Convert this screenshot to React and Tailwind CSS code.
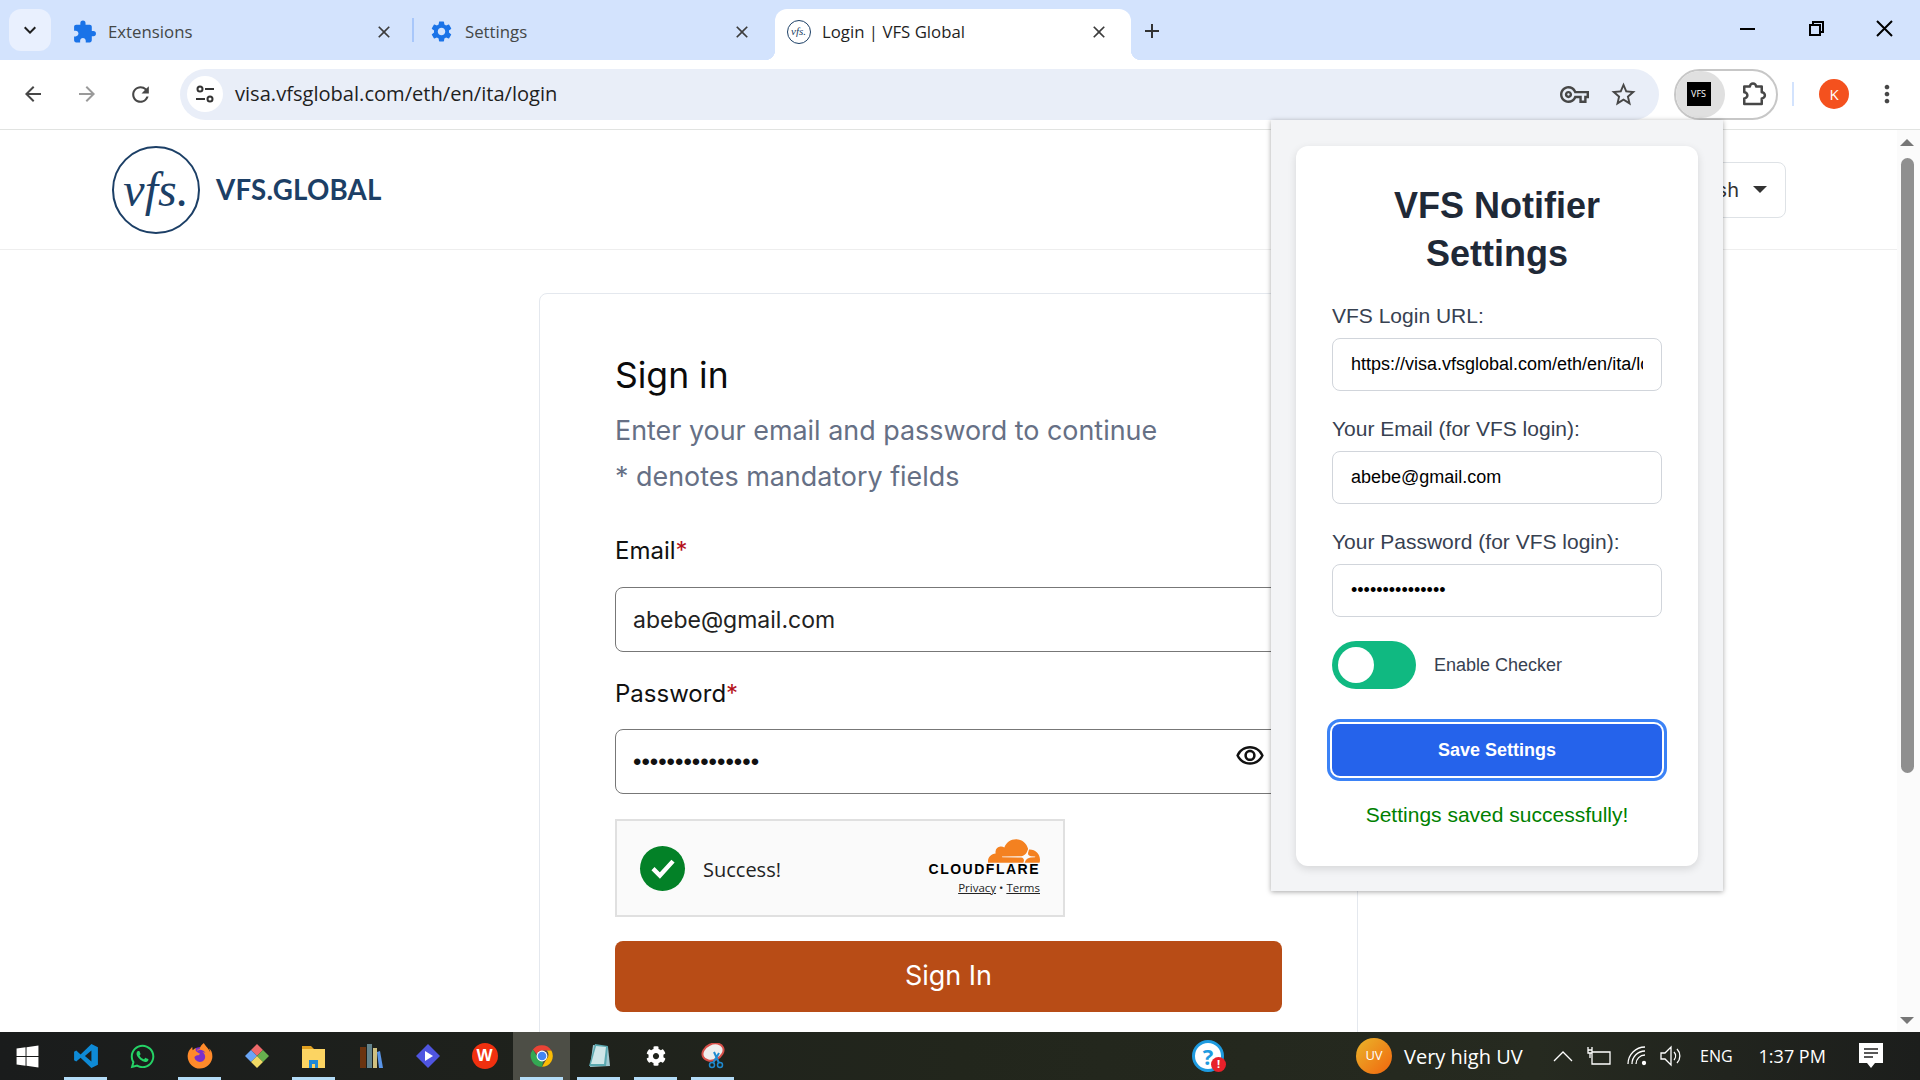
import React from "react";
import {
  MdExtension, MdSettings, MdClose, MdAdd, MdKeyboardArrowDown, MdArrowBack, MdArrowForward,
  MdRefresh, MdOutlineVpnKey, MdStarBorder, MdMoreVert, MdOutlineVisibility,
} from "react-icons/md";
import { FaWindows, FaWhatsapp, FaFirefoxBrowser, FaCog } from "react-icons/fa";
import { SiCloudflare } from "react-icons/si";

const UI = "font-['Open_Sans',sans-serif]";
const INTER = "font-['Inter',sans-serif]";
const ARIAL = "font-['Liberation_Sans',Arial,sans-serif]";

function Tab({ icon, title, active, closeGap = "mr-[22px]" }) {
  return (
    <div className={`relative flex h-[51px] w-[356px] items-center rounded-t-[12px] pb-[6px] ${active ? "bg-white text-[#1f1f1f]" : "text-[#444746]"}`}>
      {active && (
        <>
          <span className="absolute bottom-0 -left-[10px] h-[10px] w-[10px] bg-[radial-gradient(circle_at_0_0,#d3e3fd_10px,white_10.5px)]" />
          <span className="absolute -right-[10px] bottom-0 h-[10px] w-[10px] bg-[radial-gradient(circle_at_100%_0,#d3e3fd_10px,white_10.5px)]" />
        </>
      )}
      <div className="ml-[11px] flex w-[25px] justify-center">{icon}</div>
      <span className={`ml-[11px] flex-1 text-[16.8px] ${UI}`}>{title}</span>
      <MdClose size={20} className={`${closeGap} text-[#3c3c3c]`} />
    </div>
  );
}

function VfsSeal({ size, text }) {
  return (
    <div
      className="flex shrink-0 items-center justify-center rounded-full border-[#1c3f66] text-[#1c3f66]"
      style={{ width: size, height: size, borderWidth: size > 40 ? 2 : 1 }}
    >
      <span className="font-['Liberation_Serif',serif] italic" style={{ fontSize: text, lineHeight: 1 }}>vfs.</span>
    </div>
  );
}

function Field({ label, type = "text", value, mt }) {
  return (
    <div className={mt}>
      <label className="block text-[21px] leading-[28px] text-[#374151]">{label}</label>
      <input
        type={type}
        readOnly
        value={value}
        className="mt-2 block h-[53px] w-[330px] rounded-[8px] border border-[#d1d5db] bg-white px-[18px] text-[18px] text-black outline-none"
      />
    </div>
  );
}

function TaskIcon({ children, on, hover }) {
  return (
    <div className={`relative flex h-full w-[57px] items-center justify-center ${hover ? "bg-[#4d4e46]" : ""}`}>
      {children}
      {on && <span className="absolute inset-x-[7px] bottom-0 h-[3px] bg-[#b3dcf7]" />}
    </div>
  );
}

function ChromeIcon() {
  return (
    <svg width="26" height="26" viewBox="0 0 48 48">
      <path d="M24 4a20 20 0 0 1 17.3 10H24a10 10 0 0 0-9.5 6.9L7.2 12A20 20 0 0 1 24 4z" fill="#ea4335" />
      <path d="M41.3 14A20 20 0 0 1 24 44l8.7-15A10 10 0 0 0 32.600 14z" fill="#fbbc04" />
      <path d="M24 44A20 20 0 0 1 7.200 12l8.500 14.500a10 10 0 0 0 10.500 7.200z" fill="#34a853" />
      <circle cx="24" cy="24" r="10" fill="#fff" />
      <circle cx="24" cy="24" r="8" fill="#4285f4" />
    </svg>
  );
}

export default function App() {
  return (
    <div className={`relative flex h-screen w-full flex-col overflow-hidden bg-white ${ARIAL}`}>
      {/* tab strip */}
      <div className="flex h-[60px] shrink-0 items-end bg-[#d3e3fd] pl-[9px]">
        <div className="mb-[9px] flex h-[42px] w-[42px] items-center justify-center rounded-[12px] bg-[#e9f0fe]">
          <MdKeyboardArrowDown size={24} className="text-[#1f1f1f]" />
        </div>
        <div className="ml-[10px] flex w-[351px]">
          <Tab title="Extensions" closeGap="mr-[18px]" icon={<MdExtension size={28} className="text-[#1a73e8]" />} />
        </div>
        <div className="mb-[18px] h-[24px] w-[2px] bg-[#a8c7fa]" />
        <div className="ml-[4px] flex w-[357px]">
          <Tab title="Settings" icon={<MdSettings size={27} className="text-[#1a73e8]" />} />
        </div>
        <Tab active title="Login | VFS Global" icon={<VfsSeal size={24} text={11} />} />
        <MdAdd size={24} className="mb-[17px] ml-[9px] text-[#333]" />
        <div className="mb-[5px] ml-auto flex h-[52px] items-center text-black">
          <svg width="170" height="24" viewBox="0 0 170 24" className="mr-[10px]">
            <path d="M0 12h15" stroke="currentColor" strokeWidth="2" />
            <path d="M70 8h10v10h-10zM73 8V5h10v10h-3" stroke="currentColor" strokeWidth="2" fill="none" />
            <path d="M137 4l15 15M152 4l-15 15" stroke="currentColor" strokeWidth="2" />
          </svg>
        </div>
      </div>

      {/* toolbar */}
      <div className="flex h-[70px] shrink-0 items-center rounded-t-[12px] border-b border-[#e1e3e1] bg-white pb-[1px]">
        <div className="flex w-[180px] items-center pl-[21px] text-[#474747]">
          <MdArrowBack size={24} />
          <MdArrowForward size={24} className="ml-[30px] text-[#9a9a9a]" />
          <MdRefresh size={25} className="ml-[29px]" />
        </div>
        <div className="flex h-[51px] w-[1479px] items-center rounded-full bg-[#e9eef8] pl-[7px] pr-[21px]">
          <div className="flex h-[36px] w-[36px] items-center justify-center rounded-full bg-white">
            <svg width="22" height="22" viewBox="0 0 22 22" fill="none" stroke="#333" strokeWidth="2">
              <circle cx="6" cy="6" r="2.500" /><path d="M11 6h9M2 16h9" /><circle cx="16" cy="16" r="2.500" />
            </svg>
          </div>
          <span className={`ml-[12px] flex-1 pt-[1px] text-[20.100px] text-[#1f1f1f] ${UI}`}>visa.vfsglobal.com/eth/en/ita/login</span>
          <MdOutlineVpnKey size={29} className="text-[#474747]" />
          <MdStarBorder size={29} className="ml-[20px] text-[#474747]" />
        </div>
        <div className="ml-[15px] flex h-[51px] w-[104px] items-center rounded-full border-2 border-[#c7c7c7]">
          <div className="flex h-full w-[49px] items-center justify-center rounded-full bg-[#e0e0e0] pr-[4px]">
            <div className={`flex h-[24px] w-[24px] items-center justify-center bg-black text-[9px] text-white ${UI}`}>VFS</div>
          </div>
          <svg width="30" height="30" viewBox="0 0 24 24" fill="none" stroke="#474747" strokeWidth="2" strokeLinejoin="round" className="ml-[13px]">
            <path d="M5 6h4.500a2.500 2.500 0 0 1 5 0H19v4.500a2.500 2.500 0 0 1 0 5V20H5v-4.500a2.500 2.500 0 0 0 0-5z" />
          </svg>
        </div>
        <div className="ml-[14px] h-[24px] w-[2px] bg-[#d3e3fd]" />
        <div className={`ml-[25px] flex h-[30px] w-[30px] items-center justify-center rounded-full bg-[#f4511e] text-[15px] text-white ${UI}`}>K</div>
        <MdMoreVert size={28} className="ml-[24px] text-[#474747]" />
      </div>

      {/* page */}
      <div className="flex min-h-0 flex-1">
        <div className="min-w-0 flex-1 overflow-hidden">
          <header className="flex h-[120px] items-center border-b border-[#eeeeee] pl-[112px] pr-[111px]">
            <VfsSeal size={88} text={48} />
            <span className="ml-[16px] pt-[1px] font-['Lato',sans-serif] text-[27.700px] font-bold tracking-[0.2px] text-[#1c3f66]">VFS.GLOBAL</span>
            <div className={`ml-auto flex h-[56px] w-[130px] items-center justify-end rounded-[8px] border border-[#dee2e6] pr-[18px] text-[20px] text-[#333] ${INTER}`}>
              English
              <span className="ml-[14px] h-0 w-0 border-x-[7px] border-t-[7px] border-x-transparent border-t-[#333]" />
            </div>
          </header>

          <div className={`ml-[539px] mt-[43px] h-[800px] w-[819px] rounded-[8px] border border-[#e4e8ee] pl-[75px] pr-[75px] pt-[58px] ${INTER}`}>
            <h1 className="text-[35.500px] leading-[47px] text-[#0b0b0b]">Sign in</h1>
            <p className="mt-[8px] text-[26.900px] leading-[46px] text-[#667085]">Enter your email and password to continue</p>
            <p className="text-[26.900px] leading-[46px] text-[#667085]">* denotes mandatory fields</p>

            <div className="mt-[37px] text-[24px] leading-[30px] text-[#111]">Email<span className="text-[#b5121b]">*</span></div>
            <input
              readOnly
              value="abebe@gmail.com"
              className="mt-[21px] block h-[65px] w-full rounded-[8px] border border-[#777] px-[17px] text-[23px] text-[#222] outline-none"
            />

            <div className="mt-[27px] text-[24px] leading-[30px] text-[#111]">Password<span className="text-[#b5121b]">*</span></div>
            <div className="relative mt-[20px]">
              <input
                readOnly
                type="password"
                value="abebe@gmail.com"
                className={`block h-[65px] w-full rounded-[8px] border border-[#777] px-[17px] text-[24px] text-[#111] outline-none ${ARIAL}`}
              />
              <MdOutlineVisibility size={30} className="absolute right-[17px] top-[12px] text-[#111]" />
            </div>

            <div className={`mt-[25px] flex h-[98px] w-[450px] items-center border-2 border-[#e0e0e0] bg-[#fafafa] pl-[23px] pr-[23px] ${UI}`}>
              <div className="flex h-[45px] w-[45px] items-center justify-center rounded-full bg-[#038127]">
                <svg width="30" height="30" viewBox="0 0 24 24" fill="none" stroke="white" strokeWidth="3.500"><path d="M4 12.500l5.500 5.500L20 6.500" /></svg>
              </div>
              <span className="ml-[18px] flex-1 pt-[3px] text-[20px] text-[#232323]">Success!</span>
              <div className="mb-[5px] flex flex-col items-end">
                <SiCloudflare size={52} className="-mb-[14px] -mt-[12px] text-[#f48120]" />
                <span className={`-mt-[2px] text-[14px] font-bold leading-[16px] tracking-[1.500px] text-black ${ARIAL}`}>CLOUDFLARE</span>
                <span className="mt-[4px] text-[11.500px] leading-[14px] text-[#232323]"><span className="underline">Privacy</span> • <span className="underline">Terms</span></span>
              </div>
            </div>

            <button className="mt-[24px] h-[71px] w-full rounded-[8px] bg-[#b84c16] pb-[1px] text-[27px] text-white">Sign In</button>
          </div>
        </div>

        {/* scrollbar */}
        <div className="flex w-[23px] shrink-0 flex-col items-center bg-[#fbfbfb] pr-[3px] pt-[9px]">
          <span className="h-0 w-0 border-x-[7px] border-b-[7px] border-x-transparent border-b-[#777]" />
          <div className="mt-[12px] h-[615px] w-[13px] rounded-full bg-[#8f8f8f]" />
          <span className="mt-auto mb-[8px] h-0 w-0 border-x-[7px] border-t-[7px] border-x-transparent border-t-[#777]" />
        </div>
      </div>

      {/* taskbar */}
      <div className={`flex h-[48px] shrink-0 items-center bg-[linear-gradient(90deg,#1a1c1c,#22261c_50%,#262a20_80%,#1c1e1c)] text-white ${UI}`}>
        <div className="flex h-full w-[57px] items-center justify-center pr-[3px]"><FaWindows size={25} /></div>
        <TaskIcon on>
          <svg width="26" height="26" viewBox="0 0 24 24"><path d="M17 1l6 3v16l-6 3L7 13.500 3 17l-2-1V8l2-1 4 3.500zM17 7l-6 5 6 5z" fill="#0e8ad6" /></svg>
        </TaskIcon>
        <TaskIcon><FaWhatsapp size={27} className="text-[#25d366]" /></TaskIcon>
        <TaskIcon on>
          <div className="relative flex h-[26px] w-[26px] items-center justify-center">
            <span className="absolute inset-[4px] rounded-full bg-[#7b2fc9]" />
            <FaFirefoxBrowser size={26} className="relative text-[#ff8a2a]" />
          </div>
        </TaskIcon>
        <TaskIcon>
          <svg width="26" height="26" viewBox="0 0 26 26">
            <path d="M13 1l6 6-6 6-6-6z" fill="#ee6a6a" /><path d="M1 13l6-6 6 6-6 6z" fill="#6aa5f5" />
            <path d="M25 13l-6-6-6 6 6 6z" fill="#66b04e" /><path d="M13 25l-6-6 6-6 6 6z" fill="#f0d964" />
          </svg>
        </TaskIcon>
        <TaskIcon on>
          <svg width="25" height="26" viewBox="0 0 25 26">
            <path d="M1 3h9l3 3H1z" fill="#e0a020" /><path d="M1 6h23v19H1z" fill="#fcd462" />
            <path d="M8 25v-8h9v8h-3v-4h-3v4z" fill="#1e88d8" />
          </svg>
        </TaskIcon>
        <TaskIcon>
          <svg width="24" height="26" viewBox="0 0 24 26">
            <path d="M1 4h6v21H1z" fill="#6b3410" /><path d="M8 1h5v24H8z" fill="#63838c" /><path d="M14 5h4v20h-4z" fill="#d0c080" />
            <path d="M18 9l3-1 3 17h-4z" fill="#5a95e8" />
          </svg>
        </TaskIcon>
        <TaskIcon>
          <svg width="26" height="26" viewBox="0 0 26 26"><path d="M13 1l12 12-12 12L1 13z" fill="#4f55e0" /><path d="M10 8l8 5-8 5z" fill="#fff" /></svg>
        </TaskIcon>
        <TaskIcon>
          <div className={`flex h-[26px] w-[26px] items-center justify-center rounded-full bg-[#f0300f] text-[17px] font-bold text-white ${ARIAL}`}>W</div>
        </TaskIcon>
        <TaskIcon on hover><ChromeIcon /></TaskIcon>
        <TaskIcon on>
          <svg width="26" height="26" viewBox="0 0 26 26">
            <path d="M7 2l15 2 2 19-20 1z" fill="#9fc7d0" /><path d="M9 1l13 2-2 20H3z" fill="#5aa8b0" /><path d="M10 3l10 1-2 17H5z" fill="#cfe6e8" />
          </svg>
        </TaskIcon>
        <TaskIcon on><FaCog size={20} className="text-white" /></TaskIcon>
        <TaskIcon on>
          <svg width="26" height="26" viewBox="0 0 26 26">
            <ellipse cx="13" cy="9" rx="11" ry="8" transform="rotate(-25 13 9)" fill="#eee" stroke="#d6504a" strokeWidth="2" />
            <path d="M14 9l5 11M19 10l-6 10" stroke="#1f8ad0" strokeWidth="2" />
            <circle cx="20" cy="22" r="2.500" fill="none" stroke="#1f8ad0" strokeWidth="1.500" />
            <circle cx="12" cy="22" r="2.500" fill="none" stroke="#1f8ad0" strokeWidth="1.500" />
          </svg>
        </TaskIcon>

        <div className="relative ml-[451px] flex h-[32px] w-[32px] items-center justify-center rounded-full border-[3px] border-[#1e9be0] bg-white text-[22px] font-bold text-[#1e9be0]">
          ?
          <span className="absolute -bottom-[3px] -right-[5px] flex h-[15px] w-[15px] items-center justify-center rounded-full bg-[#e8202a] text-[11px] text-white">!</span>
        </div>

        <div className="ml-[132px] flex h-[36px] w-[36px] items-center justify-center rounded-full bg-[linear-gradient(135deg,#eab52a,#f1650e)] text-[13px]">UV</div>
        <span className="ml-[12px] w-[120px] whitespace-nowrap pt-[2px] text-[20px]">Very high UV</span>

        <svg width="20" height="12" viewBox="0 0 20 12" className="ml-[29px]" fill="none" stroke="white" strokeWidth="1.300"><path d="M1 11l9-9 9 9" /></svg>
        <svg width="25" height="20" viewBox="0 0 25 20" className="ml-[14px]" fill="none" stroke="white" strokeWidth="1.300">
          <path d="M5 6h18v12H5zM1 1v3M5 1v3M1 4h4v3H1zM3 7v5" />
        </svg>
        <svg width="20" height="20" viewBox="0 0 20 20" className="ml-[15px]" fill="none" stroke="white" strokeWidth="1.300">
          <path d="M1 18A17 17 0 0 1 18 1M5 18A13 13 0 0 1 18 5M9 18a9 9 0 0 1 9-9" /><circle cx="17" cy="17" r="1.500" fill="white" />
        </svg>
        <svg width="22" height="22" viewBox="0 0 22 22" className="ml-[13px]" fill="none" stroke="white" strokeWidth="1.300">
          <path d="M1 8h4l6-6v18l-6-6H1zM14 7a6 6 0 0 1 0 8M17 4a10 10 0 0 1 0 14" />
        </svg>
        <span className="ml-[18px] text-[16px]">ENG</span>
        <span className="ml-[26px] whitespace-nowrap text-[18px]">1:37 PM</span>
        <svg width="24" height="26" viewBox="0 0 24 26" className="ml-[33px]">
          <path d="M0 0h24v20h-8l-4 5-4-5H0z" fill="white" /><path d="M5 6h14M5 10h14M5 14h9" stroke="#222" strokeWidth="1.300" />
        </svg>
      </div>

      {/* extension popup */}
      <div className="absolute left-[1271px] top-[120px] bg-[#f3f4f6] p-[25px] pt-[26px] shadow-[0_1px_5px_rgba(0,0,0,0.35)]">
        <div className="w-[402px] rounded-[12px] bg-white px-[36px] pb-[37px] pt-[36px] shadow-[0_3px_8px_rgba(0,0,0,0.12)]">
          <h2 className="text-center text-[36px] font-bold leading-[48px] text-[#1f2937]">VFS Notifier Settings</h2>
          <Field mt="mt-[24px]" label="VFS Login URL:" value="https://visa.vfsglobal.com/eth/en/ita/login" />
          <Field mt="mt-[24px]" label="Your Email (for VFS login):" value="abebe@gmail.com" />
          <Field mt="mt-[24px]" label="Your Password (for VFS login):" type="password" value="abebe@gmail.com" />
          <div className="mt-[24px] flex items-center">
            <div className="flex h-[48px] w-[84px] items-center rounded-full bg-[#10b981] pl-[6px]">
              <span className="h-[36px] w-[36px] rounded-full bg-white" />
            </div>
            <span className="ml-[18px] text-[18px] text-[#374151]">Enable Checker</span>
          </div>
          <button className="mt-[35px] h-[52px] w-[330px] rounded-[8px] bg-[#2563eb] text-[18px] font-bold text-white outline-[3px] outline-offset-[2px] outline-[#3b82f6]">
            Save Settings
          </button>
          <p className="mt-[25px] text-center text-[21px] leading-[28px] text-[#008000]">Settings saved successfully!</p>
        </div>
      </div>
    </div>
  );
}
